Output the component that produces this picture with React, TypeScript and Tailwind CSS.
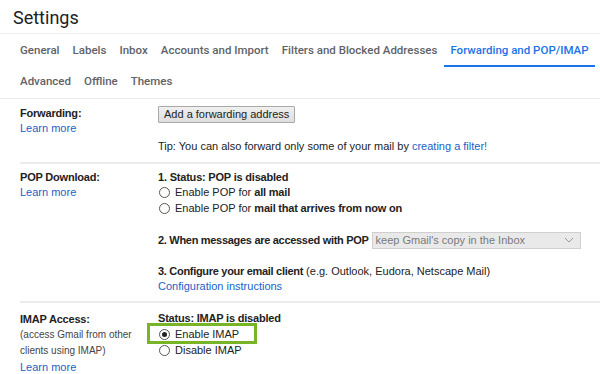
import * as React from "react"

const tabsRow1 = ["General", "Labels", "Inbox", "Accounts and Import", "Filters and Blocked Addresses"]
const tabsRow2 = ["Advanced", "Offline", "Themes"]

function Tab({ label, active }: { label: string; active?: boolean }) {
  return (
    <div
      className={
        "flex h-[31px] items-center px-[6.5px] border-b-2 " +
        (active ? "border-[#1a73e8] text-[#1a73e8]" : "border-transparent text-[#5f6368]")
      }
    >
      {label}
    </div>
  )
}

function Radio({ checked, children }: { checked?: boolean; children: React.ReactNode }) {
  return (
    <div className="flex h-[16px] items-center">
      <span className="ml-[1px] mr-[5px] flex size-[11px] items-center justify-center rounded-full border border-[#555] bg-white">
        {checked && <span className="size-[5px] rounded-full bg-[#222]" />}
      </span>
      <span>{children}</span>
    </div>
  )
}

function LearnMore() {
  return <div className="text-[#1a5fc7]">Learn more</div>
}

export default function App() {
  return (
    <div className="h-[374px] w-[600px] overflow-hidden bg-white font-['Liberation_Sans',Arial,sans-serif] text-[11px] leading-[15px] text-[#222]">
      {/* Title */}
      <div className="h-[34px] border-b border-[#eeeeee] pl-[13px] pt-[5px] font-['Roboto',sans-serif] text-[18px] leading-[26px] text-[#202124]">
        Settings
      </div>

      {/* Tabs */}
      <div className="border-b border-[#e8e8e8] pl-[13.5px] font-['Roboto',sans-serif] text-[11.5px] font-medium">
        <div className="flex pt-[1.5px]">
          {tabsRow1.map((t) => (
            <Tab key={t} label={t} />
          ))}
          <Tab label="Forwarding and POP/IMAP" active />
        </div>
        <div className="flex">
          {tabsRow2.map((t) => (
            <Tab key={t} label={t} />
          ))}
        </div>
      </div>

      {/* Forwarding */}
      <div className="ml-[20px] grid grid-cols-[138px_1fr] border-b-2 border-[#ececec] pt-[7px] pb-[8px]">
        <div className="pt-[0.5px]">
          <div className="font-bold tracking-[-0.2px]">Forwarding:</div>
          <LearnMore />
        </div>
        <div>
          <button className="h-[17px] rounded-[1px] border border-[#a9a9a9] bg-gradient-to-b from-[#f0f0f0] to-[#dedede] px-[5px] text-[11px] leading-[15px] text-[#222]">
            Add a forwarding address
          </button>
          <div className="mt-[16.5px]">
            Tip: You can also forward only some of your mail by{" "}
            <span className="text-[#1a5fc7]">creating a filter!</span>
          </div>
        </div>
      </div>

      {/* POP Download */}
      <div className="ml-[20px] grid grid-cols-[138px_1fr] border-b-2 border-[#ececec] pt-[5.5px] pb-[7px]">
        <div>
          <div className="font-bold tracking-[-0.2px]">POP Download:</div>
          <LearnMore />
        </div>
        <div>
          <div className="font-bold tracking-[-0.2px]">1. Status: POP is disabled</div>
          <Radio>
            Enable POP for <b className="tracking-[-0.2px]">all mail</b>
          </Radio>
          <Radio>
            Enable POP for <b className="tracking-[-0.2px]">mail that arrives from now on</b>
          </Radio>
          <div className="mt-[15px] flex items-center">
            <span className="font-bold tracking-[-0.3px]">2. When messages are accessed with POP</span>
            <div className="ml-[3px] flex h-[17px] w-[209px] items-center justify-between border border-[#cfcfcf] bg-[#e9e9e9] pl-[3px] pr-[6px] text-[#7a7a7a]">
              <span>keep Gmail's copy in the Inbox</span>
              <svg width="10" height="6" viewBox="0 0 10 6" fill="none">
                <path d="M1 1l4 4 4-4" stroke="#999" strokeWidth="1" />
              </svg>
            </div>
          </div>
          <div className="mt-[15px]">
            <span className="font-bold tracking-[-0.3px]">3. Configure your email client</span> (e.g. Outlook, Eudora, Netscape Mail)
          </div>
          <div className="text-[#1a5fc7]">Configuration instructions</div>
        </div>
      </div>

      {/* IMAP Access */}
      <div className="ml-[20px] grid grid-cols-[138px_1fr] pt-[8px]">
        <div className="leading-[16px]">
          <div className="font-bold tracking-[-0.2px]">IMAP Access:</div>
          <div className="text-[10px] text-[#444]">(access Gmail from other</div>
          <div className="text-[10px] text-[#444]">clients using IMAP)</div>
          <LearnMore />
        </div>
        <div className="pt-[0.5px]">
          <div className="font-bold tracking-[-0.2px]">Status: IMAP is disabled</div>
          <div className="relative">
            <Radio checked>Enable IMAP</Radio>
            <div className="pointer-events-none absolute top-[-3.5px] left-[-11px] h-[21px] w-[110px] border-[3px] border-[#78b526]" />
          </div>
          <Radio>Disable IMAP</Radio>
        </div>
      </div>
    </div>
  )
}
